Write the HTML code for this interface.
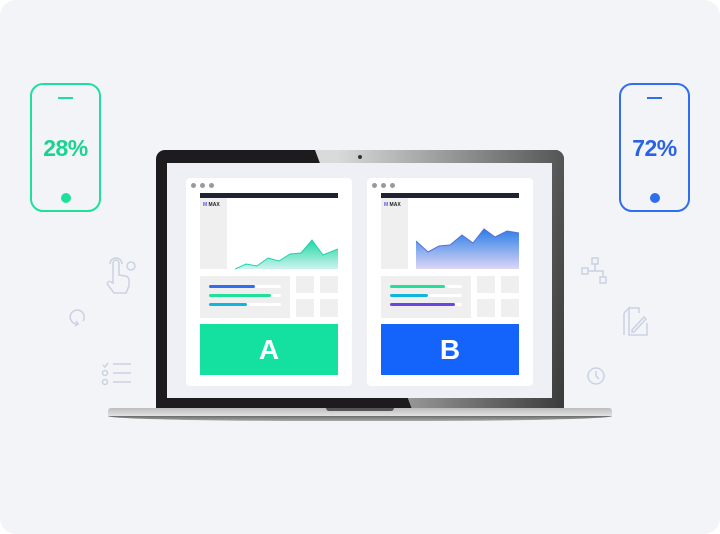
<!DOCTYPE html>
<html><head><style>
body{margin:0;width:720px;height:534px;background:#fff;overflow:hidden;font-family:"Liberation Sans",sans-serif}
.bg{position:absolute;left:0;top:0;width:720px;height:534px;background:#f3f4f8;border-radius:16px}
.a{position:absolute}
.phone{position:absolute;width:71px;height:129px;border:2px solid;border-radius:13px;box-sizing:border-box}
.phone .ln{position:absolute;left:26px;top:12px;width:15px;height:2px}
.phone .dt{position:absolute;left:29px;top:108px;width:10px;height:10px;border-radius:50%}
.phone .t{position:absolute;left:0;right:0;top:50px;text-align:center;font-weight:bold;font-size:23px;letter-spacing:-0.5px}
.panel{position:absolute;top:178px;width:166px;height:208px;background:#fff;border-radius:4px}
.g{background:#efefef;position:absolute}
</style></head><body>
<div class="bg"></div>
<div class="phone" style="left:30px;top:83px;border-color:#1fe09a;color:#1ad38f"><div class="ln" style="background:#1fe09a"></div><div class="t">28%</div><div class="dt" style="background:#1fe09a"></div></div>
<div class="phone" style="left:619px;top:83px;border-color:#2f6ef0;color:#2a62e6"><div class="ln" style="background:#2f6ef0"></div><div class="t">72%</div><div class="dt" style="background:#2f6ef0"></div></div>

<svg class="a" style="left:0;top:0" width="720" height="534" fill="none" stroke="#c9d1e3" stroke-width="1.5">
<path d="M113 283v-20a3 3 0 0 1 6 0v12l6 1a4 4 0 0 1 4 4v6l-3 7h-12l-6-8a2 2 0 0 1 3-3z"/><path d="M110 264a6 6 0 0 1 12 0"/><circle cx="131" cy="266" r="4"/>
<path d="M78 324a7 7 0 1 1 5-3"/><path d="M76 321l2 3-3 2"/>
<path d="M103 365l2 2 3-4"/><circle cx="105" cy="373" r="2.5"/><circle cx="105" cy="382" r="2.5"/><path d="M113 364h18M113 373h18M113 382h18"/>
<rect x="592" y="258" width="6" height="6"/><rect x="582" y="268" width="6" height="6"/><rect x="600" y="277" width="6" height="6"/><path d="M595 264v7h8v6M588 271h7"/>
<path d="M629 308h10v5M624 313l5-5v27h18v-12M624 313v22"/><path d="M632 330l12-13 2 2-12 13h-2z"/>
<circle cx="596" cy="376" r="8"/><path d="M596 371v5l3 3"/>
</svg>

<!-- laptop -->
<div class="a" style="left:156px;top:150px;width:408px;height:262px;background:#1d1b1d;border-radius:9px 9px 0 0"></div>
<div class="a" style="left:156px;top:150px;width:408px;height:262px;background:linear-gradient(100deg,#dadada 40%,#8a8a8a 70%,#3a3a3a);border-radius:9px 9px 0 0;clip-path:polygon(159px 0,100% 0,100% 100%,257px 100%)"></div>
<div class="a" style="left:358px;top:155px;width:4px;height:4px;border-radius:50%;background:#333"></div>
<div class="a" style="left:167px;top:163px;width:385px;height:235px;background:#eff0f5"></div>
<div class="a" style="left:108px;top:408px;width:504px;height:8px;background:linear-gradient(#bdbdbd,#e2e2e2);border-radius:3px 3px 0 0"></div>
<div class="a" style="left:108px;top:416px;width:504px;height:5px;background:linear-gradient(#6b6b6b,#a9a9a9);border-radius:0 0 40% 40%/0 0 100% 100%"></div>
<div class="a" style="left:326px;top:408px;width:68px;height:3px;background:#555;border-radius:0 0 4px 4px"></div>

<!-- panel A -->
<div class="panel" style="left:186px">
<div class="a" style="left:5px;top:5px;width:5px;height:5px;border-radius:50%;background:#999;box-shadow:9px 0 #999,18px 0 #999"></div>
<div class="a" style="left:14px;top:15px;width:138px;height:5px;background:#1e2231"></div>
<div class="g" style="left:14px;top:20px;width:27px;height:71px"></div>
<div class="a" style="left:17px;top:24px;font-size:5px;font-weight:bold;color:#222"><span style="color:#5a57e0">M</span> MAX</div>
<div class="g" style="left:14px;top:98px;width:90px;height:42px"></div>
<div class="g" style="left:110px;top:98px;width:18px;height:17px"></div><div class="g" style="left:134px;top:98px;width:18px;height:17px"></div>
<div class="g" style="left:110px;top:121px;width:18px;height:18px"></div><div class="g" style="left:134px;top:121px;width:18px;height:18px"></div>
<div class="a" style="left:23px;top:107px;width:72px;height:3px;background:#fff;border-radius:2px"></div><div class="a" style="left:23px;top:107px;width:46px;height:3px;background:#2f6ef0;border-radius:2px"></div>
<div class="a" style="left:23px;top:116px;width:72px;height:3px;background:#fff;border-radius:2px"></div><div class="a" style="left:23px;top:116px;width:62px;height:3px;background:#22df99;border-radius:2px"></div>
<div class="a" style="left:23px;top:125px;width:72px;height:3px;background:#fff;border-radius:2px"></div><div class="a" style="left:23px;top:125px;width:38px;height:3px;background:#10b5de;border-radius:2px"></div>
<div class="a" style="left:14px;top:146px;width:138px;height:51px;background:#14e19f;color:#fff;font-weight:bold;font-size:28px;text-align:center;line-height:51px">A</div>
<svg class="a" style="left:49px;top:50px" width="103" height="42"><defs><linearGradient id="ga" x1="0" y1="0" x2="0" y2="1"><stop offset="0" stop-color="#1ed8a0"/><stop offset="1" stop-color="#cdf3f0"/></linearGradient></defs><path d="M0 41L11 36 22 38 33 30 44 33 55 26 66 25 77 12 88 27 103 21V41Z" fill="url(#ga)"/><path d="M0 41L11 36 22 38 33 30 44 33 55 26 66 25 77 12 88 27 103 21" stroke="#1ed0b0" fill="none"/></svg>
</div>

<!-- panel B -->
<div class="panel" style="left:367px">
<div class="a" style="left:5px;top:5px;width:5px;height:5px;border-radius:50%;background:#999;box-shadow:9px 0 #999,18px 0 #999"></div>
<div class="a" style="left:14px;top:15px;width:138px;height:5px;background:#1e2231"></div>
<div class="g" style="left:14px;top:20px;width:27px;height:71px"></div>
<div class="a" style="left:17px;top:24px;font-size:5px;font-weight:bold;color:#222"><span style="color:#5a57e0">M</span> MAX</div>
<div class="g" style="left:14px;top:98px;width:90px;height:42px"></div>
<div class="g" style="left:110px;top:98px;width:18px;height:17px"></div><div class="g" style="left:134px;top:98px;width:18px;height:17px"></div>
<div class="g" style="left:110px;top:121px;width:18px;height:18px"></div><div class="g" style="left:134px;top:121px;width:18px;height:18px"></div>
<div class="a" style="left:23px;top:107px;width:72px;height:3px;background:#fff;border-radius:2px"></div><div class="a" style="left:23px;top:107px;width:55px;height:3px;background:#22df99;border-radius:2px"></div>
<div class="a" style="left:23px;top:116px;width:72px;height:3px;background:#fff;border-radius:2px"></div><div class="a" style="left:23px;top:116px;width:38px;height:3px;background:#10b5de;border-radius:2px"></div>
<div class="a" style="left:23px;top:125px;width:72px;height:3px;background:#fff;border-radius:2px"></div><div class="a" style="left:23px;top:125px;width:65px;height:3px;background:#6c46e0;border-radius:2px"></div>
<div class="a" style="left:14px;top:146px;width:138px;height:51px;background:#1463fb;color:#fff;font-weight:bold;font-size:28px;text-align:center;line-height:51px">B</div>
<svg class="a" style="left:49px;top:50px" width="103" height="42"><defs><linearGradient id="gb" x1="0" y1="0" x2="0" y2="1"><stop offset="0" stop-color="#2a7ee6"/><stop offset="1" stop-color="#dcd6f6"/></linearGradient></defs><path d="M0 13L12 24 23 18 34 17 46 7 57 15 68 1 79 9 91 3 103 5V41H0Z" fill="url(#gb)"/><path d="M0 13L12 24 23 18 34 17 46 7 57 15 68 1 79 9 91 3 103 5" stroke="#5a6ee0" fill="none"/></svg>
</div>
</body></html>
